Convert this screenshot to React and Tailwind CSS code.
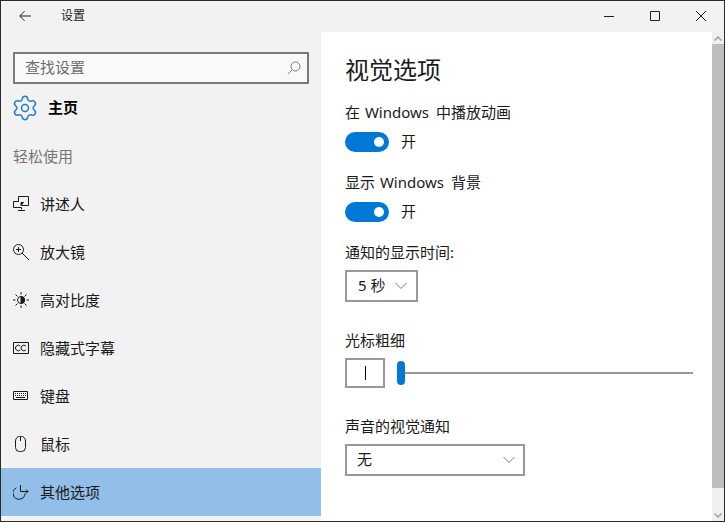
import { Settings } from 'lucide-react';

const Stroke = ({ className = 'w-4 h-4', viewBox = '0 0 16 16', children }) => (
  <svg className={className} viewBox={viewBox} fill="none" stroke="currentColor" strokeWidth="1">
    {children}
  </svg>
);

const NarratorIcon = () => (
  <Stroke>
    <path d="M5.5 5.5H.5v6h8v2M5 14.5h7M5.5 5.5V.5h10v9h-7" />
    <path d="M8 6.5v3l2.5-3z" fill="currentColor" />
  </Stroke>
);
const MagnifierIcon = () => (
  <Stroke>
    <circle cx="5.5" cy="5.5" r="5" />
    <path d="M3 5.5h5M5.5 3v5M9 9l7 7" />
  </Stroke>
);
const ContrastIcon = () => (
  <Stroke>
    <circle cx="8" cy="8" r="3.5" />
    <path d="M8 4.5a3.5 3.5 0 0 1 0 7z" fill="currentColor" />
    <path d="M8 0v2.5M8 13.5V16M0 8h2.5M13.5 8H16M2.5 2.5l2 2M11.5 11.5l2 2M13.5 2.5l-2 2M4.5 11.5l-2 2" />
  </Stroke>
);
const CaptionIcon = () => (
  <Stroke>
    <path d="M.5 2.5h15v11H.5z" />
    <path d="M7.3 6.04a2.8 2.8 0 1 0 0 3.92M12.9 6.04a2.8 2.8 0 1 0 0 3.92" />
  </Stroke>
);
const KeyboardIcon = () => (
  <Stroke>
    <path d="M.5 3.5h14v8H.5z" />
    <path d="M2 5.5h11M2 7.5h11" strokeDasharray="1 1" />
    <path d="M3 9.5h9" />
  </Stroke>
);
const MouseIcon = () => (
  <Stroke>
    <path d="M2.5 5a5 5 0 0 1 10 0v6.5a4 4 0 0 1-4 4h-2a4 4 0 0 1-4-4zM7.5 0v5" />
  </Stroke>
);
const OtherIcon = () => (
  <Stroke>
    <path d="M3.4 3.8a6 6 0 1 0 8.6 5.7" />
    <path d="M7.5 1v6.5H15M13 5.5l2 2-2 2" />
  </Stroke>
);

const Chevron = () => (
  <svg className="w-3 h-2 text-[#7a7a7a]" viewBox="0 0 12 8" fill="none" stroke="currentColor" strokeWidth="1">
    <path d="M.5 1l5.5 5.5L11.5 1" />
  </svg>
);

const navItems = [
  { label: '讲述人', Icon: NarratorIcon },
  { label: '放大镜', Icon: MagnifierIcon },
  { label: '高对比度', Icon: ContrastIcon },
  { label: '隐藏式字幕', Icon: CaptionIcon },
  { label: '键盘', Icon: KeyboardIcon },
  { label: '鼠标', Icon: MouseIcon },
  { label: '其他选项', Icon: OtherIcon, active: true },
];

const Toggle = () => (
  <div className="mt-[10px] flex items-center h-5">
    <div className="w-11 h-5 rounded-full bg-[#0078d7] flex items-center justify-end pr-[5px]">
      <div className="w-[10px] h-[10px] rounded-full bg-white" />
    </div>
    <span className="ml-3 leading-5 pb-0.5">开</span>
  </div>
);

const Select = ({ value, width, gap }) => (
  <div className={`mt-[8px] h-8 border-2 border-[#999999] flex items-center justify-between ${width} ${gap}`}>
    <span className="leading-5 pb-0.5">{value}</span>
    <Chevron />
  </div>
);

const App = () => {
  return (
    <div className="w-[725px] h-[522px] flex flex-col overflow-hidden border border-[#2b2b2b] bg-[#f2f2f2] text-[15px] text-[#1a1a1a] font-['Noto_Sans','Noto_Sans_CJK_SC',sans-serif]">
      <header className="h-[31px] shrink-0 flex items-center pb-px">
        <div className="w-12 h-full flex items-center justify-center text-[#222222]">
          <svg className="w-3 h-3" viewBox="0 0 12 12" fill="none" stroke="currentColor" strokeWidth="1">
            <path d="M12 6H.8M5.5 1.2L.8 6l4.7 4.8" />
          </svg>
        </div>
        <span className="ml-3 text-xs">设置</span>
        <div className="ml-auto flex h-full text-[#222222]">
          <div className="w-[46px] flex items-center justify-center">
            <svg className="w-[10px] h-[10px]" viewBox="0 0 10 10" stroke="currentColor" strokeWidth="1">
              <path d="M0 5.5h10" />
            </svg>
          </div>
          <div className="w-[46px] flex items-center justify-center">
            <svg className="w-[10px] h-[10px]" viewBox="0 0 10 10" fill="none" stroke="currentColor" strokeWidth="1">
              <path d="M.5.5h9v9h-9z" />
            </svg>
          </div>
          <div className="w-[46px] flex items-center justify-center">
            <svg className="w-[10px] h-[10px]" viewBox="0 0 10 10" stroke="currentColor" strokeWidth="1">
              <path d="M0 0l10 10M10 0L0 10" />
            </svg>
          </div>
        </div>
      </header>

      <div className="flex flex-1 min-h-0">
        <aside className="w-[320px] shrink-0 flex flex-col pt-5">
          <div className="mx-3 w-[296px] h-8 shrink-0 border-2 border-[#7a7a7a] bg-[#f9f9f9] flex items-center justify-between pl-[10px] pr-[6px] text-[#6e6e6e]">
            <span className="leading-5 pb-0.5">查找设置</span>
            <svg className="w-[14px] h-[14px] text-[#777777]" viewBox="0 0 14 14" fill="none" stroke="currentColor" strokeWidth="1">
              <circle cx="8.5" cy="5.5" r="4.5" />
              <path d="M5.2 8.8L.8 13.2" />
            </svg>
          </div>
          <div className="h-12 shrink-0 flex items-center pl-[10px]">
            <Settings className="w-7 h-7 text-[#2b7cc7]" strokeWidth={1.3} />
            <span className="ml-[9px] pb-0.5 font-bold text-black">主页</span>
          </div>
          <div className="h-12 shrink-0 flex items-center pl-3 text-[#767676]">轻松使用</div>
          {navItems.map(({ label, Icon, active }) => (
            <div key={label} className={`h-12 shrink-0 flex items-center pl-3 ${active ? 'bg-[#91bfe8]' : ''}`}>
              <Icon />
              <span className="ml-[11px]">{label}</span>
            </div>
          ))}
        </aside>

        <main className="flex-1 min-w-0 bg-white pl-6 pr-[19px] pt-[18px]">
          <h1 className="text-2xl leading-10">视觉选项</h1>
          <div className="mt-[12px] leading-5 [word-spacing:1px]">
            在 <span className="mr-[2px]">Windows</span> 中播放动画
          </div>
          <Toggle />
          <div className="mt-[20px] leading-5 [word-spacing:1px]">
            显示 <span className="mr-[2px]">Windows</span> 背景
          </div>
          <Toggle />
          <div className="mt-[20px] leading-5">通知的显示时间:</div>
          <Select value="5 秒" width="w-[73px]" gap="pl-[11px] pr-[9px]" />
          <div className="mt-[28px] leading-5">光标粗细</div>
          <div className="mt-[8px] flex items-center">
            <div className="w-10 h-[30px] border-2 border-[#999999] flex items-center justify-center">
              <div className="w-px h-[14px] bg-black" />
            </div>
            <div className="ml-3 w-2 h-6 rounded-full bg-[#0078d7]" />
            <div className="flex-1 h-0.5 bg-[#999999]" />
          </div>
          <div className="mt-[28px] leading-5">声音的视觉通知</div>
          <Select value="无" width="w-[180px]" gap="pl-[10px] pr-[8px]" />
        </main>

        <div className="w-3 shrink-0 flex flex-col bg-[#f0f0f0]">
          <div className="h-3 flex items-center justify-center">
            <svg className="w-2 h-[5px] text-[#a0a0a0]" viewBox="0 0 8 5" fill="none" stroke="currentColor" strokeWidth="1.5">
              <path d="M.5 4.5L4 1l3.5 3.5" />
            </svg>
          </div>
          <div className="h-[444px] bg-[#bebebe]" />
          <div className="mt-auto h-3 flex items-center justify-center">
            <svg className="w-2 h-[5px] text-[#a0a0a0]" viewBox="0 0 8 5" fill="none" stroke="currentColor" strokeWidth="1.5">
              <path d="M.5.5L4 4l3.5-3.5" />
            </svg>
          </div>
        </div>
      </div>
    </div>
  );
};

export default App;
